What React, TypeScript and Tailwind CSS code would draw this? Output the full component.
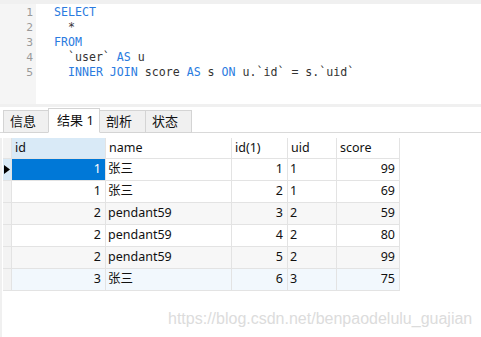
import React from 'react';

/* ─── Data ───────────────────────────────────────────────────────────────── */

type Tok = { t: string; kw?: boolean };

const CODE: Tok[][] = [
  [{ t: 'SELECT', kw: true }],
  [{ t: '  *' }],
  [{ t: 'FROM', kw: true }],
  [{ t: '  `user` ' }, { t: 'AS', kw: true }, { t: ' u' }],
  [
    { t: '  ' },
    { t: 'INNER JOIN', kw: true },
    { t: ' score ' },
    { t: 'AS', kw: true },
    { t: ' s ' },
    { t: 'ON', kw: true },
    { t: ' u.`id` = s.`uid`' },
  ],
];

const TABS = [
  { label: '信息', w: 'w-[46px]' },
  { label: '结果 1', w: 'w-[52px]', active: true },
  { label: '剖析', w: 'w-[47px]' },
  { label: '状态', w: 'w-[47px]' },
];

const COLS = [
  { key: 'id', label: 'id', w: 'w-[94px]', right: true },
  { key: 'name', label: 'name', w: 'w-[126px]' },
  { key: 'id1', label: 'id(1)', w: 'w-[56px]', right: true },
  { key: 'uid', label: 'uid', w: 'w-[49px]' },
  { key: 'score', label: 'score', w: 'w-[63px]', right: true },
] as const;

const ROWS = [
  { id: 1, name: '张三', id1: 1, uid: 1, score: 99 },
  { id: 1, name: '张三', id1: 2, uid: 1, score: 69 },
  { id: 2, name: 'pendant59', id1: 3, uid: 2, score: 59 },
  { id: 2, name: 'pendant59', id1: 4, uid: 2, score: 80 },
  { id: 2, name: 'pendant59', id1: 5, uid: 2, score: 99 },
  { id: 3, name: '张三', id1: 6, uid: 3, score: 75 },
];

const ROW_BG = ['bg-white', 'bg-white', 'bg-[#f7f7f7]', 'bg-white', 'bg-[#f7f7f7]', 'bg-[#f2f8fd]'];

/* ─── Editor ──────────────────────────────────────────────────────────────── */

function Editor() {
  return (
    <div className="flex flex-col">
      <div className="h-[4px] bg-[#f0f0f0]" />
      <div className="flex h-[100px]">
        <div className="w-[36px] bg-[#f5f5f5] pt-[1px] pr-[3px] text-right font-['DejaVu_Sans_Mono',monospace] text-[11.3px] leading-[15px] text-[#9a9a9a]">
          {CODE.map((_, i) => (
            <div key={i}>{i + 1}</div>
          ))}
        </div>
        <div className="flex-1 bg-white pl-[18px] pt-[1px] font-['DejaVu_Sans_Mono',monospace] text-[11.6px] leading-[15px] text-[#333]">
          {CODE.map((line, i) => (
            <div key={i} className="whitespace-pre">
              {line.map((tok, j) => (
                <span key={j} className={tok.kw ? 'text-[#2a7be0]' : ''}>
                  {tok.t}
                </span>
              ))}
            </div>
          ))}
        </div>
      </div>
      <div className="h-[3px] bg-[#f0f0f0]" />
    </div>
  );
}

/* ─── Tabs ────────────────────────────────────────────────────────────────── */

function Tabs() {
  return (
    <div className="flex h-[25px] items-end border-b border-[#d9d9d9] pl-[3px] font-['Noto_Sans','Noto_Sans_CJK_SC',sans-serif] text-[13px] text-[#111]">
      {TABS.map((tab, i) => (
        <div
          key={tab.label}
          className={`${tab.w} ${i > 0 ? '-ml-px' : ''} -mb-px flex items-center border border-[#d4d4d4] pl-[6px] ${
            tab.active ? 'relative z-10 h-[25px] border-b-white bg-white pl-[8px]' : 'h-[23px] bg-[#f0f0f0]'
          }`}
        >
          {tab.label}
        </div>
      ))}
    </div>
  );
}

/* ─── Grid ────────────────────────────────────────────────────────────────── */

function Grid() {
  return (
    <div className="flex flex-1 pt-[5px]">
      <div className="w-[2px] bg-[#f0f0f0]" />
      <div className="ml-px flex flex-col font-['Noto_Sans','Noto_Sans_CJK_SC',sans-serif] text-[12.5px] text-[#111]">
        {/* Header */}
        <div className="flex h-[21px]">
          <div className="w-[9px] border-r border-b border-[#e3e3e3] bg-[#f3f3f3]" />
          {COLS.map((c, i) => (
            <div
              key={c.key}
              className={`${c.w} flex items-center border-r border-b border-[#e3e3e3] pl-[3px] leading-none ${
                i === 0 ? 'bg-[#d9eaf7]' : 'bg-white'
              }`}
            >
              {c.label}
            </div>
          ))}
        </div>

        {/* Rows */}
        {ROWS.map((r, ri) => (
          <div key={ri} className={`flex h-[22px] ${ROW_BG[ri]}`}>
            <div
              className={`flex w-[9px] items-center justify-center border-r border-b border-[#e3e3e3] ${
                ri === 0 ? 'bg-[#d9eaf7]' : 'bg-[#f3f3f3]'
              }`}
            >
              {ri === 0 && (
                <svg width="6" height="9" viewBox="0 0 6 9" aria-hidden>
                  <path d="M0 0L6 4.5L0 9Z" fill="#000" />
                </svg>
              )}
            </div>
            {COLS.map((c, ci) => {
              const selected = ri === 0 && ci === 0;
              return (
                <div
                  key={c.key}
                  className={`${c.w} flex items-center border-r border-b border-[#e3e3e3] leading-none ${
                    c.right ? 'justify-end pr-[4px]' : 'pl-[2px]'
                  } ${selected ? 'bg-[#0078d7] text-white' : ''}`}
                >
                  {r[c.key]}
                </div>
              );
            })}
          </div>
        ))}
      </div>
    </div>
  );
}

/* ─── App ─────────────────────────────────────────────────────────────────── */

export default function App() {
  return (
    <div className="relative flex h-[337px] w-[481px] flex-col overflow-hidden bg-white">
      <Editor />
      <div className="h-[1px]" />
      <Tabs />
      <Grid />
      <div className="absolute top-[309px] left-[168px] font-['Liberation_Sans',Arial,sans-serif] text-[16px] leading-[20px] text-[#dcdcdc]">
        https://blog.csdn.net/benpaodelulu_guajian
      </div>
    </div>
  );
}
